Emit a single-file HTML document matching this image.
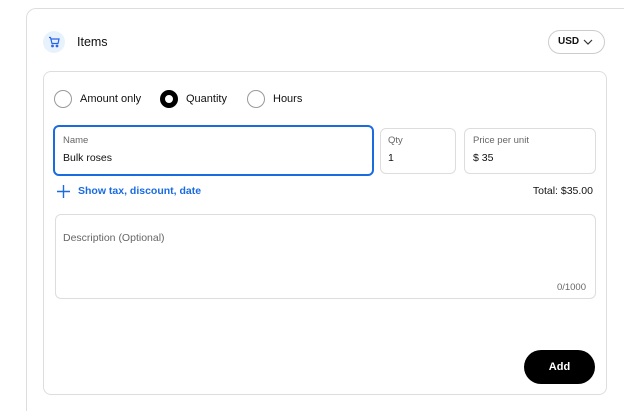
<!DOCTYPE html>
<html style="width:624px;height:411px;overflow:hidden"><head><style>
*{box-sizing:border-box;margin:0;padding:0}
body{width:624px;height:411px;background:#fff;font-family:"Liberation Sans",sans-serif;position:relative;overflow:hidden;color:#111}
.abs{position:absolute}
.outer{left:26px;top:8px;width:598px;height:403px;border:1px solid #ddd;border-bottom:none;border-right:none;border-radius:10px 0 0 0}
.inner{left:43px;top:71px;width:564px;height:324px;border:1px solid #ddd;border-radius:8px}
.radio{width:18px;height:18px;border:1.5px solid #999;border-radius:50%}
.t{font-size:11px;white-space:nowrap}
.field{border:1px solid #ddd;border-radius:6px}
.lbl{font-size:10px;color:#666}
</style></head><body>
<div class="abs outer"></div>
<div class="abs" style="left:43px;top:31px;width:22px;height:22px;border-radius:50%;background:#e8f2fd"></div>
<svg class="abs" style="left:48px;top:36px" width="12" height="12" viewBox="0 0 12 12" fill="none" stroke="#2563eb" stroke-width="1.2"><path d="M1 1.5h1.5l1.5 6h6l1-4.5H3"/><circle cx="4.5" cy="10" r=".8"/><circle cx="9" cy="10" r=".8"/></svg>
<div class="abs t" style="left:77px;top:35px;font-size:12.5px">Items</div>
<div class="abs" style="left:548px;top:30px;width:57px;height:24px;border:1px solid #ccc;border-radius:12px"></div>
<div class="abs t" style="left:558px;top:36px;font-size:10px;font-weight:bold">USD</div>
<svg class="abs" style="left:583px;top:39px" width="10" height="7" viewBox="0 0 10 7" fill="none" stroke="#333" stroke-width="1.2"><path d="M1 1l4 4 4-4"/></svg>
<div class="abs inner"></div>
<div class="abs radio" style="left:54px;top:90px"></div>
<div class="abs t" style="left:80px;top:93px">Amount only</div>
<div class="abs radio" style="left:160px;top:90px;border:5px solid #000"></div>
<div class="abs t" style="left:186px;top:93px">Quantity</div>
<div class="abs radio" style="left:247px;top:90px"></div>
<div class="abs t" style="left:273px;top:93px">Hours</div>
<div class="abs" style="left:53px;top:125px;width:321px;height:51px;border:2px solid #1a6be0;border-radius:6px"></div>
<div class="abs lbl" style="left:63px;top:135px;font-size:9.5px">Name</div>
<div class="abs t" style="left:63px;top:152px;font-size:10.5px">Bulk roses</div>
<div class="abs field" style="left:380px;top:128px;width:76px;height:46px"></div>
<div class="abs lbl" style="left:388px;top:135px;font-size:9.5px">Qty</div>
<div class="abs t" style="left:388px;top:152px;font-size:10.5px">1</div>
<div class="abs field" style="left:464px;top:128px;width:132px;height:46px"></div>
<div class="abs lbl" style="left:473px;top:135px;font-size:9.5px">Price per unit</div>
<div class="abs t" style="left:473px;top:152px;font-size:10.5px">$ 35</div>
<svg class="abs" style="left:57px;top:185px" width="13" height="13" viewBox="0 0 13 13" stroke="#1a6be0" stroke-width="1.4"><path d="M6.5 0v13M0 6.5h13"/></svg>
<div class="abs t" style="left:78px;top:185px;font-size:10.5px;font-weight:bold;color:#1a6be0">Show tax, discount, date</div>
<div class="abs t" style="right:31px;top:185px;font-size:10.5px">Total: $35.00</div>
<div class="abs field" style="left:55px;top:214px;width:541px;height:85px"></div>
<div class="abs lbl" style="left:63px;top:232px;font-size:10.5px">Description (Optional)</div>
<div class="abs lbl" style="right:38px;top:282px;font-size:9.5px">0/1000</div>
<div class="abs" style="left:524px;top:350px;width:71px;height:34px;background:#000;border-radius:17px;color:#fff;font-size:11px;font-weight:bold;text-align:center;line-height:34px">Add</div>
</body></html>
